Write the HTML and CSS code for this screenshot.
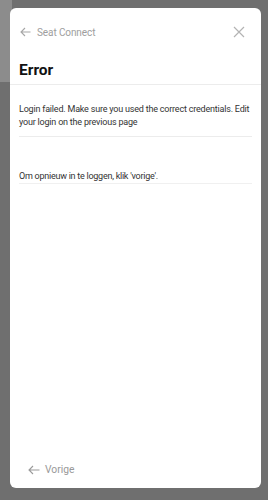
FILE: index.html
```html
<!DOCTYPE html>
<html lang="nl">
  <head>
    <meta charset="UTF-8" />
    <title>Seat Connect</title>
    <link rel="stylesheet" href="styles.css">
  </head>
  <body>
    <div class="behind"></div>
    <div class="dialog">
      <div class="topBar">
        <div class="back">
          <svg width="11" height="10" viewBox="0 0 11 10"><path d="M10.5 5H1M5 1L1 5l4 4" fill="none" stroke="#a6a6a6" stroke-width="1.1"/></svg>
          <span>Seat Connect</span>
        </div>
        <svg class="close" width="12" height="12" viewBox="0 0 12 12"><path d="M1 1l10 10M11 1L1 11" fill="none" stroke="#b3b3b3" stroke-width="1.2"/></svg>
      </div>
      <h1 class="title">Error</h1>
      <div class="content">
        <p class="msg">Login failed. Make sure you used the correct credentials. Edit your login on the previous page</p>
        <p class="msg2">Om opnieuw in te loggen, klik 'vorige'.</p>
      </div>
      <div class="footer">
        <svg width="12" height="10" viewBox="0 0 12 10"><path d="M11.5 5H1M5 1L1 5l4 4" fill="none" stroke="#9a9a9a" stroke-width="1.1"/></svg>
        <span>Vorige</span>
      </div>
    </div>
  </body>
</html>
```

FILE: styles.css
```css
html,
body {
  margin: 0;
  padding: 0;
  height: 100%;
}
body {
  background: #6f6f6f;
  font-family: Roboto, "Liberation Sans", sans-serif;
  position: relative;
  overflow: hidden;
}
.behind {
  position: absolute;
  left: 0;
  top: 0;
  width: 12px;
  height: 82px;
  background: #8c8c8c;
}
.dialog {
  position: relative;
  margin: 8px 7px 0 10px;
  height: 480px;
  background: #fff;
  border-radius: 6px;
  display: flex;
  flex-direction: column;
}
.topBar {
  display: flex;
  align-items: center;
  justify-content: space-between;
  padding: 18px 16px 0 10px;
  height: 12px;
}
.back {
  display: flex;
  align-items: center;
  gap: 6px;
  color: #9e9e9e;
  font-size: 10px;
  letter-spacing: -0.1px;
}
.title {
  margin: 0;
  padding: 22px 9px 4px;
  font-size: 15.5px;
  font-weight: 700;
  color: #111;
  line-height: 20px;
  border-bottom: 1px solid #ececec;
}
.content {
  padding: 0 9px;
  flex: 1;
}
.msg {
  margin: 0;
  padding: 18px 0 7px;
  font-size: 9px;
  letter-spacing: -0.2px;
  line-height: 13px;
  color: #333;
  border-bottom: 1px solid #ececec;
}
.msg2 {
  margin: 0;
  padding: 33px 0 0;
  font-size: 9px;
  letter-spacing: -0.25px;
  line-height: 13px;
  color: #333;
  border-bottom: 1px solid #f0f0f0;
}
.footer {
  display: flex;
  align-items: center;
  gap: 5px;
  padding: 0 18px 12px;
  color: #999;
  font-size: 10.3px;
}
```
